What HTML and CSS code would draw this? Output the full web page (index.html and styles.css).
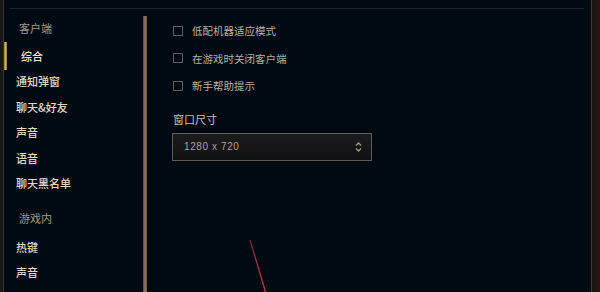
FILE: index.html
```html
<!DOCTYPE html>
<html lang="zh">
<head>
<meta charset="utf-8">
<link rel="stylesheet" href="styles.css">
</head>
<body>
<div class="frame">
  <div class="edge-left"></div>
  <div class="main">
    <div class="topline"></div>
    <div class="body">
      <nav class="sidebar">
        <div class="group-title">客户端</div>
        <div class="item active">综合</div>
        <div class="item">通知弹窗</div>
        <div class="item">聊天&amp;好友</div>
        <div class="item">声音</div>
        <div class="item">语音</div>
        <div class="item">聊天黑名单</div>
        <div class="group-title second">游戏内</div>
        <div class="item first-after">热键</div>
        <div class="item">声音</div>
      </nav>
      <div class="divider"></div>
      <section class="content">
        <label class="check-row"><span class="box"></span><span class="check-label">低配机器适应模式</span></label>
        <label class="check-row"><span class="box"></span><span class="check-label">在游戏时关闭客户端</span></label>
        <label class="check-row"><span class="box"></span><span class="check-label">新手帮助提示</span></label>
        <div class="field-title">窗口尺寸</div>
        <div class="select">
          <span class="select-value">1280 x 720</span>
          <svg class="select-arrows" width="7" height="12" viewBox="0 0 7 12">
            <path d="M1 4.5 L3.5 2 L6 4.5" fill="none" stroke="#a09b8c" stroke-width="1.3"/>
            <path d="M1 7.5 L3.5 10 L6 7.5" fill="none" stroke="#a09b8c" stroke-width="1.3"/>
          </svg>
        </div>
        <svg class="annot" width="30" height="60" viewBox="0 0 30 60">
          <defs>
            <linearGradient id="rl" x1="0" y1="0" x2="0" y2="1">
              <stop offset="0" stop-color="#6a2a35"/>
              <stop offset="1" stop-color="#e0303a"/>
            </linearGradient>
          </defs>
          <line x1="2" y1="1" x2="19" y2="58" stroke="url(#rl)" stroke-width="1.4"/>
        </svg>
      </section>
    </div>
  </div>
  <div class="edge-right"></div>
</div>
</body>
</html>
```

FILE: styles.css
```css
html, body {
  margin: 0;
  padding: 0;
  background: #010a13;
  overflow: hidden;
}

.frame {
  display: flex;
  width: 600px;
  height: 292px;
  background: #010a13;
  font-family: "Noto Sans CJK SC", "Liberation Sans", sans-serif;
}

.edge-left {
  width: 3px;
  background: #1c1813;
  border-right: 1px solid #3a3227;
  flex: none;
}

.main {
  flex: 1;
  display: flex;
  flex-direction: column;
  padding-top: 8px;
  min-width: 0;
}

.topline {
  height: 1px;
  background: #1e2429;
  margin-left: 6px;
}

.body {
  flex: 1;
  display: flex;
  min-height: 0;
}

.sidebar {
  width: 139px;
  flex: none;
  padding-top: 7px;
  display: flex;
  flex-direction: column;
}

.group-title {
  height: 25px;
  line-height: 25px;
  padding-left: 15px;
  font-size: 11px;
  color: #9d998e;
}

.group-title.second {
  margin-top: 9px;
}

.item {
  height: 25.5px;
  line-height: 25.5px;
  padding-left: 12px;
  font-size: 11px;
  font-weight: 500;
  color: #e2d8c2;
}

.item.first-after {
  margin-top: 4px;
  height: 25px;
  line-height: 25px;
}

.item.active {
  position: relative;
  margin-top: 2px;
  height: 26px;
  line-height: 26px;
  padding-left: 17px;
  color: #f0e6d2;
}

.item.active::before {
  content: "";
  position: absolute;
  left: 0;
  top: -1px;
  width: 3px;
  height: 28px;
  background: linear-gradient(to right, #8a6a30, #d6b46a, #8a6a30);
}

.divider {
  width: 4px;
  flex: none;
  margin-top: 7px;
  background: linear-gradient(to right, #5a4830, #8f7a58, #6a5636);
}

.content {
  position: relative;
  flex: 1;
  padding-top: 8px;
  padding-left: 26px;
  display: flex;
  flex-direction: column;
  align-items: flex-start;
}

.check-row {
  display: flex;
  align-items: center;
  height: 27.5px;
}

.box {
  width: 8px;
  height: 8px;
  border: 1px solid #5f5d58;
  margin-right: 9px;
}

.check-label {
  font-size: 10.5px;
  color: #b6b0a2;
}

.field-title {
  margin-top: 12px;
  font-size: 11px;
  line-height: 14px;
  color: #c8c1b1;
}

.select {
  margin-top: 7px;
  margin-left: -1px;
  height: 26px;
  border: 1px solid #5e5c55;
  background: linear-gradient(to bottom, #1c1c1d, #101113);
  display: flex;
  align-items: center;
  justify-content: space-between;
  padding: 0 9px 0 11px;
  box-sizing: content-box;
  width: 178px;
}

.select-value {
  font-family: "Liberation Sans", sans-serif;
  font-size: 10px;
  letter-spacing: 0.6px;
  color: #a8a294;
}

.select-arrows {
  display: block;
}

.annot {
  position: absolute;
  left: 101px;
  top: 230px;
}

.edge-right {
  width: 16px;
  flex: none;
  background: linear-gradient(to right, #030a11 0, #030a11 7px, #3c3d40 7px, #3c3d40 8px, #1a150f 8px, #221a12 100%);
}
```
